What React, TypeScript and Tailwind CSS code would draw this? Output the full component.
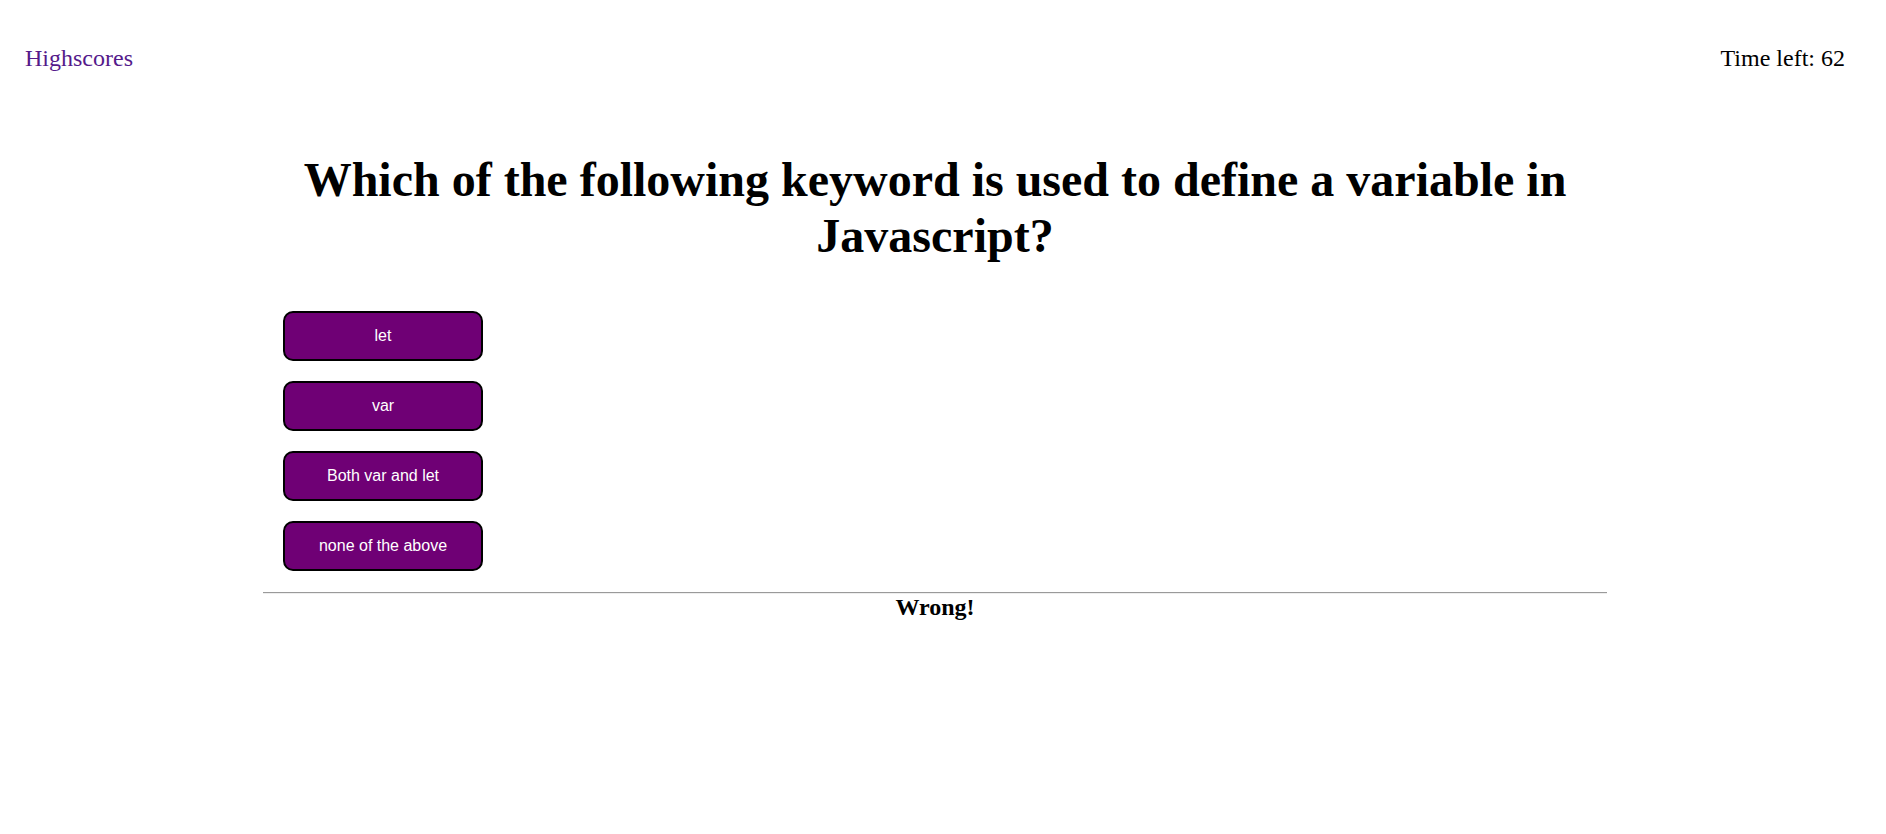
import React from "react";

const serif = { fontFamily: '"Liberation Serif", "Times New Roman", serif' };

export default function App() {
  const answers = ["let", "var", "Both var and let", "none of the above"];
  return (
    <div className="min-h-[834px] bg-white text-black" style={serif}>
      <header className="flex justify-between pl-[25px] pr-[41px] pt-[44px] text-[24px] leading-[28px]">
        <a href="#" className="text-[#551a8b]">Highscores</a>
        <span>Time left: 62</span>
      </header>
      <main className="ml-[263px] w-[1344px]">
        <h1 className="mt-[80px] text-center text-[48px] font-bold leading-[56px] px-[30px]">
          Which of the following keyword is used to define a variable in Javascript?
        </h1>
        <div className="mt-[47px] pl-[20px] flex flex-col gap-[20px]">
          {answers.map((a) => (
            <button
              key={a}
              className="w-[200px] h-[50px] rounded-[10px] border-2 border-black bg-[#6f0075] text-white text-[16px]"
              style={{ fontFamily: '"Liberation Sans", Arial, sans-serif' }}
            >
              {a}
            </button>
          ))}
        </div>
        <div className="mt-[21px] border-t border-t-[#9a9a9a] border-b border-b-[#eeeeee]" />
        <p className="text-center text-[24px] font-bold leading-[26px]">Wrong!</p>
      </main>
    </div>
  );
}
